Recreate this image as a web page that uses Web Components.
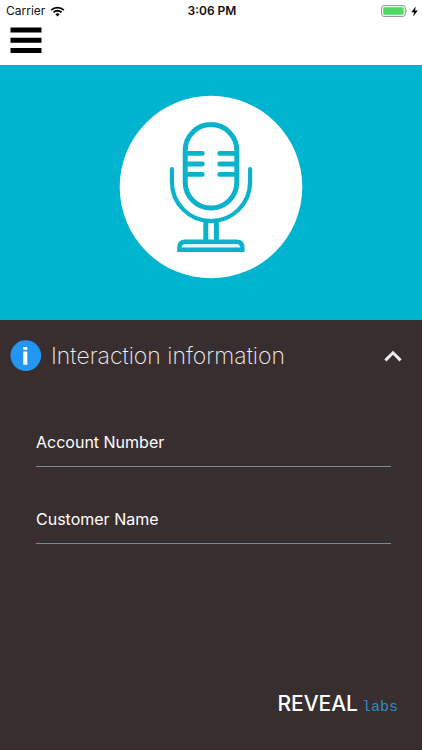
<!DOCTYPE html>
<html lang="en">
<head>
<meta charset="utf-8">
<meta name="viewport" content="width=device-width, initial-scale=1">
<title>Interaction</title>
<style>
  html, body { margin: 0; height: 100%; }
  body { background: #382e30; font-family: Inter, "Liberation Sans", sans-serif; }
</style>
</head>
<body>
<app-screen>
  <status-bar slot="top" carrier="Carrier" time="3:06 PM"></status-bar>
  <nav-bar slot="top"></nav-bar>
  <mic-hero slot="hero"></mic-hero>
  <info-panel heading="Interaction information">
    <line-field label="Account Number" name="account"></line-field>
    <line-field label="Customer Name" name="customer"></line-field>
  </info-panel>
  <brand-mark slot="footer"></brand-mark>
</app-screen>
<script>
const define = (name, render) => customElements.define(name, class extends HTMLElement {
  connectedCallback() {
    if (this.shadowRoot) return;
    this.attachShadow({ mode: "open" }).innerHTML = render(this);
  }
});

define("app-screen", () => `
<style>
  :host { display: flex; flex-direction: column; min-height: 100vh; background: #382e30; }
  header { background: #fff; }
  main { flex: 1; }
  footer { display: flex; justify-content: flex-end; padding: 0 24px 30px; }
</style>
<header><slot name="top"></slot></header>
<slot name="hero"></slot>
<main><slot></slot></main>
<footer><slot name="footer"></slot></footer>`);

define("status-bar", el => `
<style>
  :host { display: grid; grid-template-columns: 1fr auto 1fr; align-items: center; height: 22px;
    padding: 0 4px 0 6px; font-size: 12px; line-height: 16px; color: #111; }
  .left, .right { display: flex; align-items: center; gap: 5px; }
  .right { justify-content: flex-end; gap: 3px; }
  .time { font-weight: 600; }
  svg { display: block; }
</style>
<div class="left"><span>${el.getAttribute("carrier")}</span>
  <svg width="15" height="11" viewBox="0 0 15 11" aria-hidden="true">
    <path d="M1.2 4.1A9 9 0 0 1 13.8 4.1M3.5 6.4A5.7 5.7 0 0 1 11.5 6.4" fill="none" stroke="#000" stroke-width="1.8"/>
    <path d="M7.5 10.6 5.3 8.3A3.2 3.2 0 0 1 9.7 8.3Z"/>
  </svg></div>
<span class="time">${el.getAttribute("time")}</span>
<div class="right">
  <svg width="27" height="12" viewBox="0 0 27 12" aria-hidden="true">
    <rect x=".6" y=".6" width="23.6" height="10.8" rx="2.4" fill="#fff" stroke="#8f8f8f"/>
    <rect x="2.2" y="2.2" width="20.4" height="7.6" rx="1" fill="#4cd964"/>
    <path d="M25.4 4.2Q26.8 6 25.4 7.8Z" fill="#8f8f8f"/>
  </svg>
  <svg width="7" height="11" viewBox="0 0 7 11" aria-hidden="true"><path d="M4.8.4.2 6.2H3L2.2 10.6 6.8 4.6H4Z"/></svg>
</div>`);

define("nav-bar", () => `
<style>
  :host { display: flex; padding: 5px 10px 11px; }
  button { display: block; border: 0; padding: 0; background: none; }
  svg { display: block; }
</style>
<button type="button" aria-label="Menu">
  <svg width="32" height="27" viewBox="0 0 32 27"><path d="M.5.5h31v5H.5zM.5 10.7h31v5H.5zM.5 20.9h31v5H.5z"/></svg>
</button>`);

define("mic-hero", () => `
<style>
  :host { display: flex; justify-content: center; padding: 30px 0 41px; background: #00b4cf; }
  svg { display: block; }
</style>
<svg width="184" height="184" viewBox="119 95 184 184" role="img" aria-label="Microphone">
  <circle cx="211" cy="187" r="91.3" fill="#fff"/>
  <g fill="none" stroke="#0bb2cb" stroke-width="5" stroke-linecap="round">
    <rect x="185.2" y="124.6" width="51.6" height="83.4" rx="25.8"/>
    <path stroke-width="4.8" d="M186 153.4h16.3M186 164h16.3M186 174.4h16.3M236 153.4h-16.3M236 164h-16.3M236 174.4h-16.3"/>
    <path stroke-width="4.2" d="M171.9 169v13a39.1 39.1 0 0 0 78.2 0v-13"/>
    <path stroke-linecap="butt" d="M205.8 220v20M216.4 220v20"/>
    <path fill="#e4f9fb" stroke-width="4.4" stroke-linecap="butt" d="M179.4 249.7v-2q0-6 6-6h51q6 0 6 6v2z"/>
  </g>
</svg>`);

define("info-panel", el => `
<style>
  :host { display: block; }
  .head { display: flex; align-items: center; gap: 9px; padding: 20px 18px 0 10px; }
  h1 { flex: 1; margin: 0; font: 200 23px/32px Inter, "Liberation Sans", sans-serif; color: #f4efef; }
  button { border: 0; padding: 6px 1px; background: none; }
  svg { display: block; }
  form { display: grid; gap: 40px; padding: 58px 31px 0 36px; }
</style>
<div class="head">
  <svg width="32" height="32" viewBox="0 0 32 32" aria-hidden="true">
    <circle cx="15.8" cy="15.6" r="15.3" fill="#2196f3"/>
    <path d="M13.3 7h4v2.8h-4zM13.3 11.6h4v13.2h-4z" fill="#fff"/>
  </svg>
  <h1>${el.getAttribute("heading")}</h1>
  <button type="button" aria-label="Collapse">
    <svg width="20" height="14" viewBox="0 0 20 14"><path d="M2.4 11.4 10 3.8l7.6 7.6" fill="none" stroke="#eee" stroke-width="3"/></svg>
  </button>
</div>
<form><slot></slot></form>`);

define("line-field", el => `
<style>
  :host { display: grid; border-bottom: 1px solid #6e918e; height: 36px; }
  label, input { grid-area: 1 / 1; font: 400 16px/24px Inter, "Liberation Sans", sans-serif; color: #fff; }
  label { pointer-events: none; }
  input { min-width: 0; height: 24px; padding: 0; border: 0; outline: 0; background: none; }
</style>
<label for="f">${el.getAttribute("label")}</label>
<input id="f" name="${el.getAttribute("name")}" type="text">`);

define("brand-mark", () => `
<style>
  :host { display: flex; align-items: baseline; gap: 4px; line-height: 24px; }
  .a { font-size: 21px; font-weight: 500; color: #fff; }
  .b { font-family: "Liberation Mono", monospace; font-size: 15px; color: #3489c4; }
</style>
<span class="a">REVEAL</span><span class="b">labs</span>`);
</script>
</body>
</html>
